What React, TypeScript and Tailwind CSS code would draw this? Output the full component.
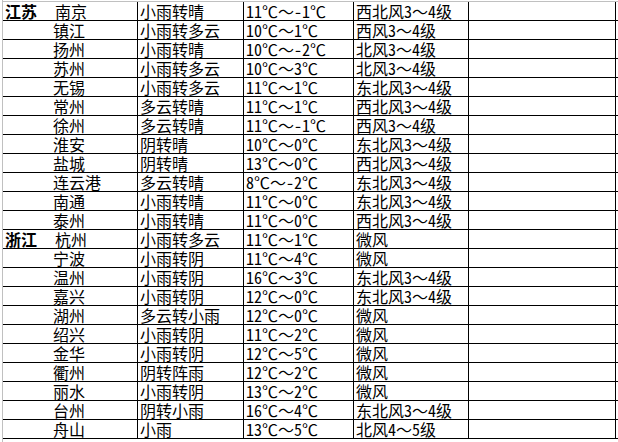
type Row = {
  prov?: string;
  city: string;
  weather: string;
  temp: string;
  wind: string;
};

const rows: Row[] = [
  { prov: "江苏", city: "南京", weather: "小雨转晴", temp: "11℃～-1℃", wind: "西北风3～4级" },
  { city: "镇江", weather: "小雨转多云", temp: "10℃～1℃", wind: "西风3～4级" },
  { city: "扬州", weather: "小雨转晴", temp: "10℃～-2℃", wind: "北风3～4级" },
  { city: "苏州", weather: "小雨转多云", temp: "10℃～3℃", wind: "北风3～4级" },
  { city: "无锡", weather: "小雨转多云", temp: "11℃～1℃", wind: "东北风3～4级" },
  { city: "常州", weather: "多云转晴", temp: "11℃～1℃", wind: "西北风3～4级" },
  { city: "徐州", weather: "多云转晴", temp: "11℃～-1℃", wind: "西风3～4级" },
  { city: "淮安", weather: "阴转晴", temp: "10℃～0℃", wind: "东北风3～4级" },
  { city: "盐城", weather: "阴转晴", temp: "13℃～0℃", wind: "西北风3～4级" },
  { city: "连云港", weather: "多云转晴", temp: "8℃～-2℃", wind: "东北风3～4级" },
  { city: "南通", weather: "小雨转晴", temp: "11℃～0℃", wind: "东北风3～4级" },
  { city: "泰州", weather: "小雨转晴", temp: "11℃～0℃", wind: "西北风3～4级" },
  { prov: "浙江", city: "杭州", weather: "小雨转多云", temp: "11℃～1℃", wind: "微风" },
  { city: "宁波", weather: "小雨转阴", temp: "11℃～4℃", wind: "微风" },
  { city: "温州", weather: "小雨转阴", temp: "16℃～3℃", wind: "东北风3～4级" },
  { city: "嘉兴", weather: "小雨转阴", temp: "12℃～0℃", wind: "东北风3～4级" },
  { city: "湖州", weather: "多云转小雨", temp: "12℃～0℃", wind: "微风" },
  { city: "绍兴", weather: "小雨转阴", temp: "11℃～2℃", wind: "微风" },
  { city: "金华", weather: "小雨转阴", temp: "12℃～5℃", wind: "微风" },
  { city: "衢州", weather: "阴转阵雨", temp: "12℃～2℃", wind: "微风" },
  { city: "丽水", weather: "小雨转阴", temp: "13℃～2℃", wind: "微风" },
  { city: "台州", weather: "阴转小雨", temp: "16℃～4℃", wind: "东北风3～4级" },
  { city: "舟山", weather: "小雨", temp: "13℃～5℃", wind: "北风4～5级" },
];

// digits and minus sign get half-width glyphs, the rest stays full width
function Mixed({ text }: { text: string }) {
  const parts = text.match(/[0-9-]+|[^0-9-]+/g) ?? [];
  return (
    <>
      {parts.map((p, i) =>
        /[0-9-]/.test(p) ? (
          <span key={i} className="[font-feature-settings:'hwid']">
            {p}
          </span>
        ) : (
          <span key={i}>{p}</span>
        )
      )}
    </>
  );
}

function WeatherRow({ row }: { row: Row }) {
  return (
    <div className="grid h-[19px] grid-cols-[135px_106px_110px_115px_147px] border-b border-black">
      <div className="flex items-end border-r border-black">
        <span className="w-[50px] pl-[2px] font-bold">{row.prov}</span>
        <span className={row.prov ? "pl-[2px]" : ""}>{row.city}</span>
      </div>
      <div className="flex items-end border-r border-black pl-[2px]">{row.weather}</div>
      <div className="flex items-end border-r border-black pl-[2px]">
        <span>
          <Mixed text={row.temp} />
        </span>
      </div>
      <div className="flex items-end border-r border-black pl-[2px]">
        <span>
          <Mixed text={row.wind} />
        </span>
      </div>
      <div className="border-r border-black" />
    </div>
  );
}

export default function App() {
  return (
    <div className="h-[442px] w-[618px] overflow-hidden bg-white pl-[2px] font-['Noto_Sans_CJK_SC',sans-serif] text-[16px] leading-[18px] text-black">
      <div className="h-full w-[616px] border-l border-[#c0c0c0]">
        <div className="h-[2px] border-b border-[#c0c0c0]" />
        {rows.map((row, i) => (
          <WeatherRow key={i} row={row} />
        ))}
      </div>
    </div>
  );
}
